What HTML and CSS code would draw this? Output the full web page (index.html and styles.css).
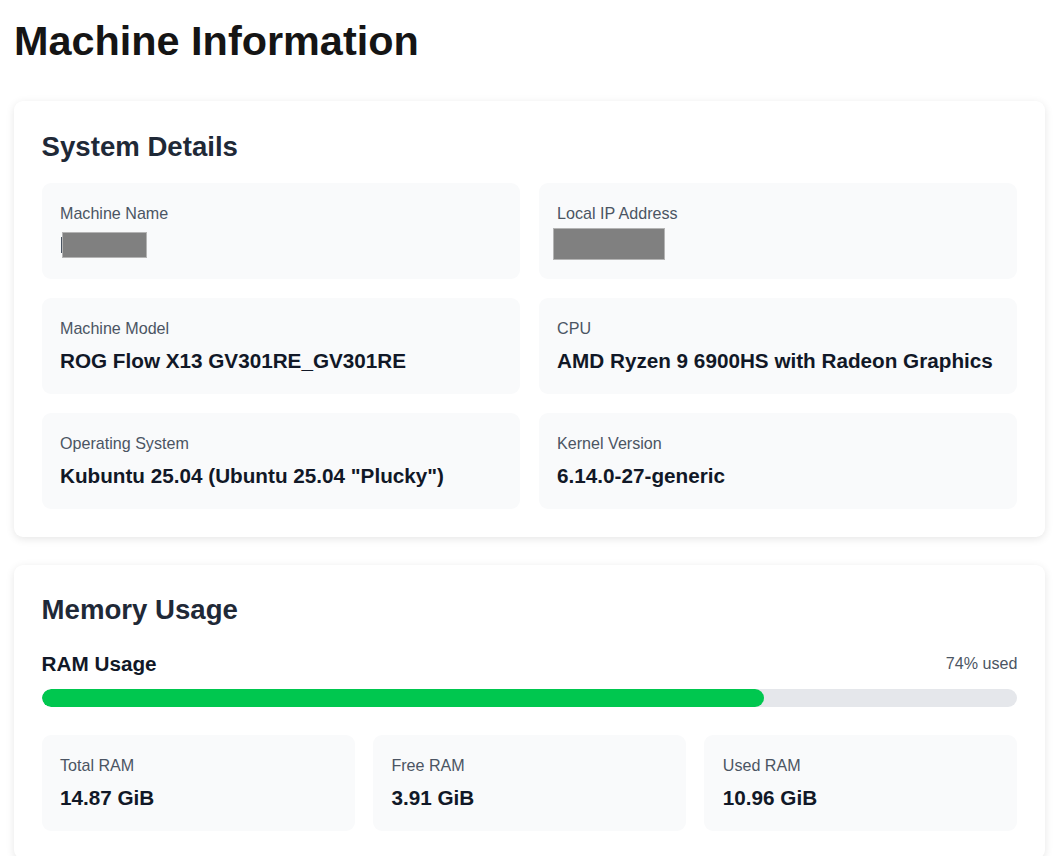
FILE: index.html
```html
<!DOCTYPE html>
<html lang="en">
<head>
<meta charset="utf-8">
<title>Machine Information</title>
<link rel="stylesheet" href="styles.css">
</head>
<body>
<main class="page">
  <h1 class="page-title">Machine Information</h1>

  <section class="card">
    <h2 class="card-title">System Details</h2>
    <div class="grid grid-2">
      <div class="item">
        <div class="label">Machine Name</div>
        <div class="value value-redacted"><span class="caret"></span><span class="redact redact-name"></span></div>
      </div>
      <div class="item">
        <div class="label">Local IP Address</div>
        <div class="value value-redacted"><span class="redact redact-ip"></span></div>
      </div>
      <div class="item">
        <div class="label">Machine Model</div>
        <div class="value">ROG Flow X13 GV301RE_GV301RE</div>
      </div>
      <div class="item">
        <div class="label">CPU</div>
        <div class="value">AMD Ryzen 9 6900HS with Radeon Graphics</div>
      </div>
      <div class="item">
        <div class="label">Operating System</div>
        <div class="value">Kubuntu 25.04 (Ubuntu 25.04 "Plucky")</div>
      </div>
      <div class="item">
        <div class="label">Kernel Version</div>
        <div class="value">6.14.0-27-generic</div>
      </div>
    </div>
  </section>

  <section class="card">
    <h2 class="card-title">Memory Usage</h2>
    <div class="usage-head">
      <h3 class="usage-title">RAM Usage</h3>
      <span class="usage-pct">74% used</span>
    </div>
    <div class="bar"><div class="bar-fill" style="width: 74.05%"></div></div>
    <div class="grid grid-3">
      <div class="item">
        <div class="label">Total RAM</div>
        <div class="value">14.87 GiB</div>
      </div>
      <div class="item">
        <div class="label">Free RAM</div>
        <div class="value">3.91 GiB</div>
      </div>
      <div class="item">
        <div class="label">Used RAM</div>
        <div class="value">10.96 GiB</div>
      </div>
    </div>
  </section>
</main>
</body>
</html>
```

FILE: styles.css
```css
* { box-sizing: border-box; }

html, body {
  margin: 0;
  padding: 0;
  background: #ffffff;
}

body {
  font-family: "Liberation Sans", Arial, sans-serif;
  color: #111827;
}

.page {
  padding: 18px 9px 0 14px;
}

.page-title {
  margin: 0 0 36px 0;
  font-size: 41.4px;
  font-weight: 700;
  line-height: normal;
  color: #151515;
}

.card {
  background: #ffffff;
  border-radius: 9px;
  box-shadow: 0 2px 8px rgba(0, 0, 0, 0.10);
  padding: 27.6px;
  margin-bottom: 28px;
}

.card-title {
  margin: 0 0 18.4px 0;
  font-size: 27.6px;
  font-weight: 700;
  line-height: 1.3;
  color: #1f2937;
}

.grid {
  display: grid;
  gap: 18.4px;
}

.grid-2 { grid-template-columns: 1fr 1fr; }
.grid-3 { grid-template-columns: 1fr 1fr 1fr; }

.item {
  background: #f9fafb;
  border-radius: 9px;
  padding: 18.4px;
}

.label {
  font-size: 16.1px;
  line-height: 1.5;
  color: #4b5563;
  margin-bottom: 4.6px;
}

.value {
  font-size: 20.7px;
  line-height: 1.5;
  font-weight: 700;
  color: #111827;
}

.value-redacted {
  display: flex;
  align-items: center;
  height: 31px;
}

.caret {
  display: inline-block;
  width: 2px;
  height: 16px;
  background: #4b5563;
  margin-left: 0.6px;
}

.redact {
  display: inline-block;
  background: #808080;
  border: 1px solid #b4b4b4;
}

.redact-name {
  width: 85px;
  height: 26px;
  margin-left: -1px;
  margin-top: -1px;
}

.redact-ip {
  width: 112px;
  height: 32px;
  margin-left: -4.2px;
  margin-top: -2px;
}

.usage-head {
  display: flex;
  justify-content: space-between;
  align-items: center;
  margin-bottom: 10px;
  padding-top: 1px;
}

.usage-title {
  margin: 0;
  font-size: 20.7px;
  line-height: 1.5;
  font-weight: 700;
  color: #111827;
}

.usage-pct {
  font-size: 16.1px;
  color: #4b5563;
}

.bar {
  height: 18.4px;
  background: #e5e7eb;
  border-radius: 9.2px;
  overflow: hidden;
  margin-bottom: 27.6px;
}

.bar-fill {
  height: 100%;
  background: #00c74f;
  border-radius: 9.2px;
}
```
